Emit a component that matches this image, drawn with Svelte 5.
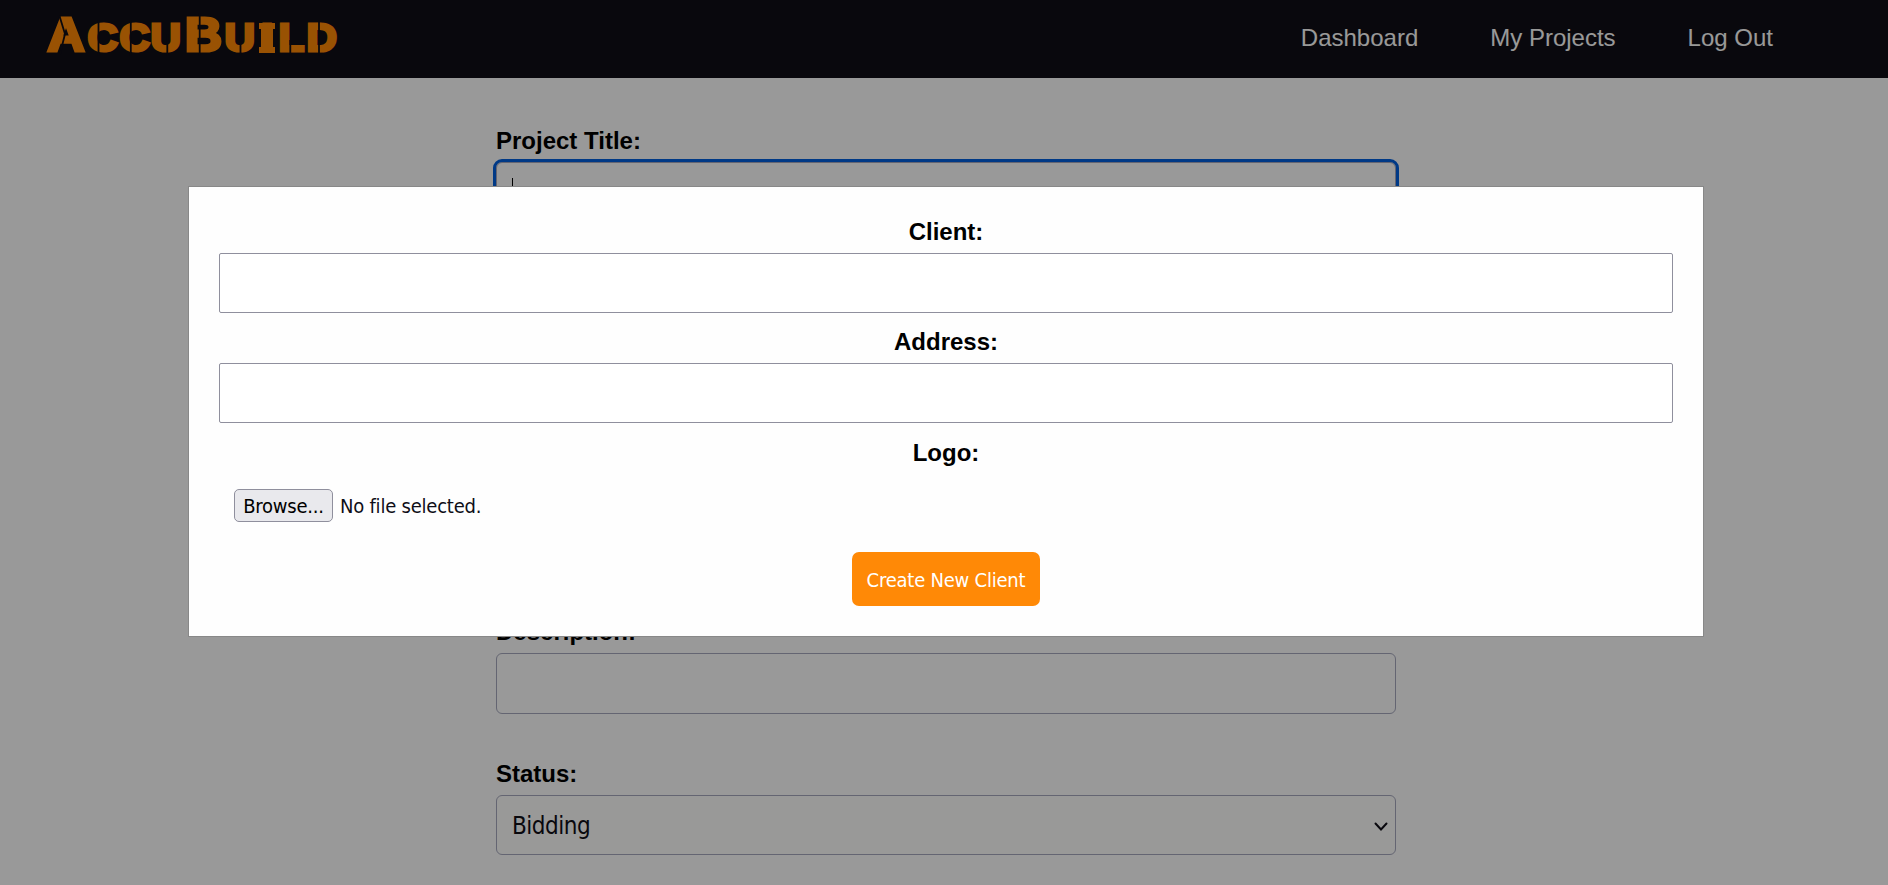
<script>
  const links = ['Dashboard', 'My Projects', 'Log Out'];
  const modalFields = ['Client:', 'Address:'];
</script>

<div class="page">
  <header>
    <svg class="brand" width="316" height="70" viewBox="34 4 316 70" role="img" aria-label="AccuBuild">
      <text transform="scale(1.08 1)" y="51.4" x="44 81.2 110.8 139.5 171.3 208 241.8 258 284"><tspan class="big">A</tspan><tspan>CCU</tspan><tspan class="big">B</tspan><tspan>UILD</tspan></text>
      <path class="serifs" d="M259 23h16v6h-2v18h2v6h-16v-6h2v-18h-2z" />
      <path class="cuts" d="M59.5 16L65 34L60 54M98.5 20v36M130.8 20v36M167.3 34v22M199.7 13v43M240.5 34v22M290.3 40v16M319 20v36" />
    </svg>
    <nav>
      {#each links as link}<a href="#top">{link}</a>{/each}
    </nav>
  </header>
  <main>
    <section class="field title">
      <span class="label">Project Title:</span>
      <div class="box focused"><i class="caret"></i></div>
    </section>
    <section class="field description">
      <span class="label">Description:</span>
      <div class="box tall"></div>
    </section>
    <section class="field">
      <span class="label">Status:</span>
      <div class="box select">
        <span class="value">Bidding</span>
        <svg width="14" height="10" viewBox="0 0 14 10"><path d="M1.5 1.5L7 7.5L12.5 1.5" /></svg>
      </div>
    </section>
  </main>
</div>

<div class="overlay">
  <div class="modal">
    {#each modalFields as name}
      <div class="row">
        <span class="label">{name}</span>
        <div class="input"></div>
      </div>
    {/each}
    <span class="label logo">Logo:</span>
    <div class="file">
      <button class="browse"><span>Browse...</span></button>
      <span class="none">No file selected.</span>
    </div>
    <button class="create"><span>Create New Client</span></button>
  </div>
</div>

<style>
  :global(body) {
    margin: 0;
    overflow: hidden;
    background: #fff;
  }
  .page {
    height: 885px;
    overflow: hidden;
    background: #fff;
    font-family: "Liberation Sans", Arial, sans-serif;
  }
  header {
    height: 78px;
    box-sizing: border-box;
    padding: 4px 115px 0 34px;
    display: flex;
    justify-content: space-between;
    align-items: flex-start;
    background: #0f0e17;
  }
  .brand text {
    font: 900 38.5px "Liberation Sans", Arial, sans-serif;
    fill: #ff8906;
    stroke: #ff8906;
    stroke-width: 3.2px;
  }
  .brand .big {
    font-size: 47.5px;
  }
  .serifs {
    fill: #ff8906;
  }
  .cuts {
    fill: none;
    stroke: #0f0e17;
    stroke-width: 1.8px;
  }
  nav {
    display: flex;
    gap: 72px;
    padding-top: 20px;
  }
  nav a {
    color: #fffffe;
    font-size: 24px;
    line-height: 28px;
    text-decoration: none;
  }
  main {
    width: 900px;
    margin: 0 auto;
    padding: 49px 0 0 4px;
  }
  .field {
    display: flex;
    flex-direction: column;
    gap: 7px;
    margin-bottom: 46px;
  }
  .title {
    margin-bottom: 396px;
  }
  .label {
    font: bold 24px/28px "Liberation Sans", Arial, sans-serif;
    color: #000;
  }
  .box {
    height: 60px;
    box-sizing: border-box;
    padding: 0 15px;
    border: 1px solid #a7a9be;
    border-radius: 6px;
    background: #fff;
  }
  .tall {
    height: 61px;
  }
  .focused {
    outline: 3px solid #0060df;
    display: flex;
    align-items: center;
  }
  .caret {
    width: 1px;
    height: 29px;
    background: #000;
  }
  .select {
    display: flex;
    align-items: center;
    justify-content: space-between;
    padding: 3px 7px 0 15px;
    background: #fffffe;
  }
  .select svg path {
    fill: none;
    stroke: #0f0e17;
    stroke-width: 2px;
    stroke-linecap: round;
  }
  .value,
  .browse,
  .none,
  .create {
    font-family: Tahoma, "DejaVu Sans Condensed", "DejaVu Sans", sans-serif;
    font-stretch: condensed;
  }
  .value {
    font-size: 24px;
    line-height: 31px;
    letter-spacing: -0.5px;
    color: #0f0e17;
  }
  .overlay {
    position: fixed;
    inset: 0;
    background: rgba(0, 0, 0, 0.4);
    display: flex;
    flex-direction: column;
    align-items: center;
    padding-top: 186px;
  }
  .modal {
    width: 1516px;
    height: 451px;
    margin-left: 4px;
    box-sizing: border-box;
    padding: 31px 30px 0;
    border: 1px solid #888;
    background: #fefefe;
    display: flex;
    flex-direction: column;
    align-items: center;
  }
  .row {
    width: 100%;
    display: flex;
    flex-direction: column;
    align-items: center;
    gap: 7px;
    margin-bottom: 15px;
  }
  .input {
    width: 100%;
    height: 60px;
    box-sizing: border-box;
    border: 1px solid #8f8f9d;
    border-radius: 2px;
    background: #fff;
  }
  .logo {
    margin-top: 1px;
  }
  .file {
    align-self: stretch;
    display: flex;
    align-items: center;
    gap: 7px;
    margin: 22px 0 30px 15px;
    height: 33px;
  }
  .none,
  .browse,
  .create {
    font-size: 20px;
    letter-spacing: -0.22px;
    white-space: nowrap;
  }
  .none {
    color: #0f0e17;
  }
  .browse {
    width: 99px;
    height: 33px;
    padding: 0;
    border: 1px solid #8f8f9d;
    border-radius: 5px;
    background: #e9e9ed;
    color: #000;
  }
  .create {
    width: 188px;
    height: 54px;
    padding: 1px 0 0;
    border: 0;
    border-radius: 7px;
    background: #ff8906;
    color: #fffffe;
  }
</style>
